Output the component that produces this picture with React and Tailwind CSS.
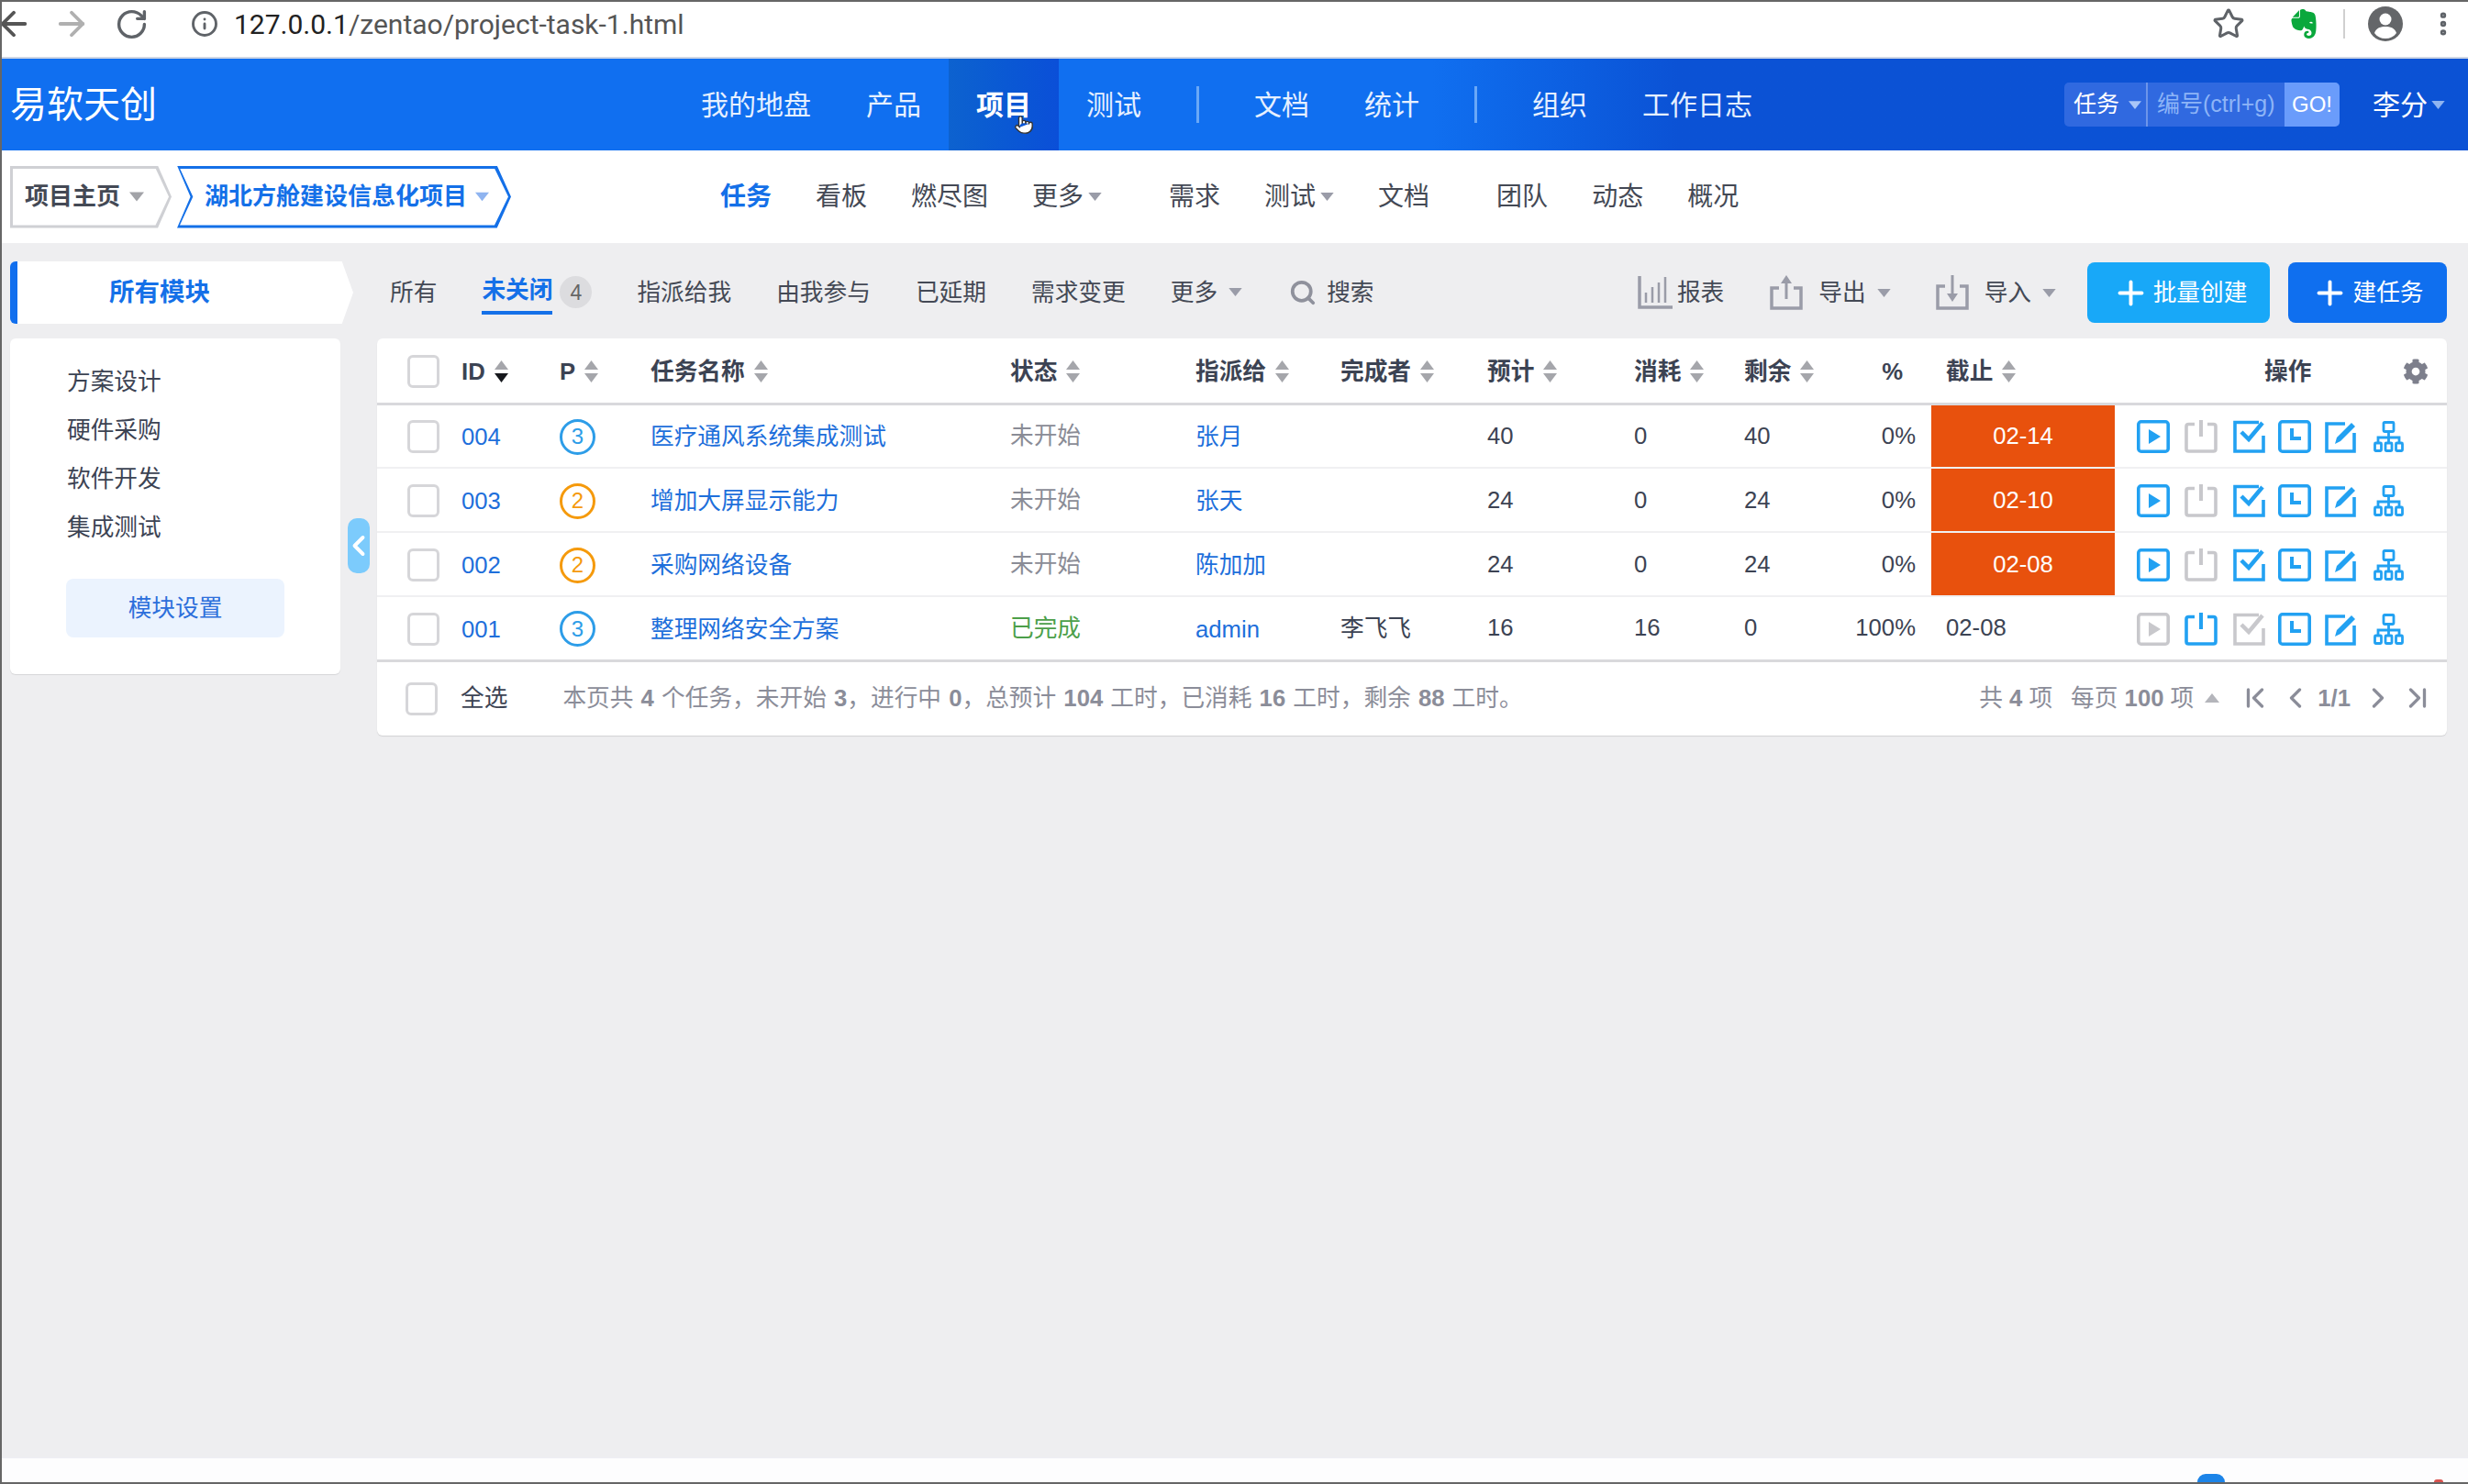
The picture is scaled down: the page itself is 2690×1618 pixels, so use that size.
import React from 'react';
import { ArrowLeft, ArrowRight, RotateCw, Info, Star, EllipsisVertical, Plus, Search, ChevronLeft, ChevronRight, ChevronFirst, ChevronLast, Pointer } from 'lucide-react';
import { FaCog } from 'react-icons/fa';
import { SiEvernote } from 'react-icons/si';

const tasks = [
  { id: '004', pri: 3, name: '医疗通风系统集成测试', status: '未开始', to: '张月', by: '', est: 40, used: 0, left: 40, pct: '0%', due: '02-14', late: true },
  { id: '003', pri: 2, name: '增加大屏显示能力', status: '未开始', to: '张天', by: '', est: 24, used: 0, left: 24, pct: '0%', due: '02-10', late: true },
  { id: '002', pri: 2, name: '采购网络设备', status: '未开始', to: '陈加加', by: '', est: 24, used: 0, left: 24, pct: '0%', due: '02-08', late: true },
  { id: '001', pri: 3, name: '整理网络安全方案', status: '已完成', to: 'admin', by: '李飞飞', est: 16, used: 16, left: 0, pct: '100%', due: '02-08', late: false, done: true },
];

const ON = '#22a1f2';
const OFF = '#c8c8cc';

function Caret({ color = '#9a9ca8', up = false, w = 16, h = 10, className = '' }) {
  return (
    <svg width={w} height={h} viewBox="0 0 16 10" className={className}>
      <path d={up ? 'M8 0L16 10H0Z' : 'M0 0H16L8 10Z'} fill={color} />
    </svg>
  );
}

function SortIcon({ active }) {
  return (
    <svg width="17" height="24" viewBox="0 0 17 24" className="ml-[9px] shrink-0">
      <path d="M8.5 0L16 10H1Z" fill="#a5a6ab" />
      <path d="M1 14H16L8.5 24Z" fill={active ? '#16181d' : '#a5a6ab'} />
    </svg>
  );
}

function Checkbox() {
  return <div className="w-[35px] h-[36px] rounded-[6px] border-[3px] border-[#d6d6d9] bg-white" />;
}

function PlayIcon({ color }) {
  return (
    <svg width="36" height="36" viewBox="0 0 36 36" fill="none">
      <rect x="1.8" y="1.8" width="32.4" height="32.4" rx="3" stroke={color} strokeWidth="3.6" />
      <path d="M13 10L26 18L13 26Z" fill={color} />
    </svg>
  );
}

function FinishIcon({ color }) {
  return (
    <svg width="36" height="36" viewBox="0 0 36 36" fill="none">
      <path d="M11 4.500H4.500Q2 4.500 2 7V31.500Q2 34 4.500 34H31.500Q34 34 34 31.500V7Q34 4.500 31.500 4.500H25" stroke={color} strokeWidth="3.600" />
      <path d="M18 0V18" stroke={color} strokeWidth="4" />
    </svg>
  );
}

function CheckIcon({ color }) {
  return (
    <svg width="36" height="36" viewBox="0 0 36 36" fill="none">
      <path d="M28 2.500H2V34H33V17" stroke={color} strokeWidth="3.600" />
      <path d="M9 13L17 21L32 3" stroke={color} strokeWidth="4.500" />
    </svg>
  );
}

function ClockIcon({ color }) {
  return (
    <svg width="36" height="36" viewBox="0 0 36 36" fill="none">
      <rect x="1.800" y="1.800" width="32.400" height="32.400" rx="3" stroke={color} strokeWidth="3.600" />
      <path d="M15 9V20H25" stroke={color} strokeWidth="4" />
    </svg>
  );
}

function EditIcon({ color }) {
  return (
    <svg width="36" height="36" viewBox="0 0 36 36" fill="none">
      <path d="M22 4H2V34H32V14" stroke={color} strokeWidth="3.600" />
      <path d="M11 26L13 19L29 3L33 7L17 23Z" fill={color} />
    </svg>
  );
}

function TreeIcon({ color }) {
  return (
    <svg width="34" height="34" viewBox="0 0 34 34" fill="none" stroke={color} strokeWidth="2.800">
      <rect x="11" y="1.500" width="11" height="10" rx="1" />
      <path d="M16.500 11.500V18M5 24V18H28V24M16.500 18V24" />
      <rect x="1.500" y="24" width="7" height="8.500" rx="1" />
      <rect x="13" y="24" width="7" height="8.500" rx="1" />
      <rect x="24.500" y="24" width="7" height="8.500" rx="1" />
    </svg>
  );
}

function BarsIcon() {
  return (
    <svg width="38" height="36" viewBox="0 0 38 36" fill="none" stroke="#9a9ca8">
      <path d="M2 0V34H38" strokeWidth="3.500" />
      <path d="M9 18V29M16 12V29M23 7V29M30 1V29" strokeWidth="2.500" />
    </svg>
  );
}

function ExportIcon() {
  return (
    <svg width="36" height="38" viewBox="0 0 36 38" fill="none" stroke="#9a9ca8">
      <path d="M10 14H2V36H34V14H26" strokeWidth="3.500" />
      <path d="M18 26V4" strokeWidth="3" />
      <path d="M12 9L18 0L24 9Z" fill="#9a9ca8" stroke="none" />
    </svg>
  );
}

function ImportIcon() {
  return (
    <svg width="36" height="38" viewBox="0 0 36 38" fill="none" stroke="#9a9ca8">
      <path d="M10 12H2V36H34V12H26" strokeWidth="3.500" />
      <path d="M18 0V22" strokeWidth="3" />
      <path d="M12 20L18 29L24 20Z" fill="#9a9ca8" stroke="none" />
    </svg>
  );
}

function Th({ label, sort = true, active = false }) {
  return (
    <th className="p-0 pt-[3px] pl-[10px] font-bold text-left">
      <div className="flex items-center whitespace-nowrap">
        {label}
        {sort && <SortIcon active={active} />}
      </div>
    </th>
  );
}

const topNav1 = ['我的地盘', '产品', '项目', '测试'];
const topNav2 = ['文档', '统计'];
const topNav3 = ['组织', '工作日志'];

export default function App() {
  const navItem = (t) => (
    <a key={t} className={`h-full px-[30px] flex items-center whitespace-nowrap relative ${t === '项目' ? 'font-bold text-white bg-linear-to-r from-[#0d62cf] to-[#0b4fd8]' : 'text-[#e6f0ff]'}`}>
      {t}
      {t === '项目' && <Pointer size={22} fill="#fff" stroke="#333" strokeWidth={1.500} className="absolute left-[71px] top-[61px]" />}
    </a>
  );

  return (
    <div className="w-full h-[1618px] flex flex-col overflow-hidden bg-[#eeeef0] border-l-2 border-b-2 border-[#666] text-[25.700px] text-[#3c4353] font-['Liberation_Sans','Noto_Sans_CJK_SC',sans-serif]">
      {/* browser bar */}
      <div className="h-[64px] shrink-0 flex items-center pb-[12px] bg-white border-t-2 border-b-2 border-t-[#666] border-b-[#ced6e4] text-[#5f6368]">
        <ArrowLeft size={42} strokeWidth={2.200} className="-ml-[8px] shrink-0 text-[#555]" />
        <ArrowRight size={42} strokeWidth={2.200} className="ml-[21px] shrink-0 text-[#b0b0b0]" />
        <RotateCw size={37} strokeWidth={2.200} className="ml-[26px] shrink-0" />
        <Info size={30} strokeWidth={2.300} className="ml-[46px] shrink-0" />
        <div className="ml-[17px] text-[30px] font-['Roboto',sans-serif] text-[#222] whitespace-nowrap">
          127.0.0.1<span className="text-[#555]">/zentao/project-task-1.html</span>
        </div>
        <div className="ml-auto flex items-center">
          <Star size={36} strokeWidth={2} />
          <SiEvernote size={32} className="ml-[48px] text-[#0aa83c]" />
          <div className="ml-[27px] w-[2px] h-[32px] bg-[#d0d0d0]" />
          <svg width="38" height="38" viewBox="0 0 38 38" className="ml-[25px]">
            <circle cx="19" cy="19" r="19" fill="#646669" />
            <circle cx="19" cy="14" r="6.500" fill="#fff" />
            <path d="M7 29C9 23 14 22 19 22S29 23 31 29C28 33 24 35 19 35S10 33 7 29Z" fill="#fff" />
          </svg>
          <EllipsisVertical size={32} strokeWidth={2.800} className="ml-[28px] mr-[11px]" />
        </div>
      </div>

      {/* main nav */}
      <div className="h-[100px] shrink-0 flex items-center text-white text-[30px] bg-linear-to-r from-[#106ff0] from-58% to-[#0b52d5] to-68%">
        <div className="ml-[9px] w-[723px] text-[40px] leading-none">易软天创</div>
        {topNav1.map(navItem)}
        <div className="mx-[30px] w-[3px] h-[40px] bg-[#6aa8f7]" />
        {topNav2.map(navItem)}
        <div className="mx-[30px] w-[3px] h-[40px] bg-[#6aa8f7]" />
        {topNav3.map(navItem)}
        <div className="ml-auto flex items-center">
          <div className="h-[48px] flex items-stretch rounded-[5px] overflow-hidden text-[25px] bg-[#3069e0]">
            <div className="w-[91px] flex items-center pl-[10px] border-r-[2px] border-[#6d95ea]">
              任务
              <Caret color="#a9c6f8" w={14} h={9} className="ml-[10px]" />
            </div>
            <div className="w-[149px] flex items-center pl-[10px] text-[#8db4f7] whitespace-nowrap">编号(ctrl+g)</div>
            <div className="w-[60px] flex items-center justify-center bg-[#6a9cfb] text-[24px]">GO!</div>
          </div>
          <div className="ml-[36px] mr-[25px] flex items-center">
            李分
            <Caret color="#8fb4f0" w={15} h={9} className="ml-[4px]" />
          </div>
        </div>
      </div>

      {/* project nav */}
      <div className="h-[101px] shrink-0 bg-white flex items-center text-[28px] text-[#444955]">
        <div className="ml-[9px] w-[176px] h-[68px] bg-[#cfd0d4] p-[3px] [clip-path:polygon(0_0,91.500%_0,100%_50%,91.500%_100%,0_100%)]">
          <div className="h-full bg-white pl-[13px] flex items-center font-bold text-[26px] [clip-path:polygon(0_0,91.500%_0,100%_50%,91.500%_100%,0_100%)]">
            项目主页
            <Caret w={16} h={11} color="#a2a3a8" className="ml-[10px]" />
          </div>
        </div>
        <div className="ml-[6px] w-[364px] h-[68px] bg-[#1470e8] p-[3px] [clip-path:polygon(0_0,95.800%_0,100%_50%,95.800%_100%,0_100%,4%_50%)]">
          <div className="h-full bg-white pl-[27px] flex items-center font-bold text-[26px] text-[#1470e8] whitespace-nowrap [clip-path:polygon(0_0,95.800%_0,100%_50%,95.800%_100%,0_100%,4%_50%)]">
            湖北方舱建设信息化项目
            <Caret w={15} h={11} color="#8fb4f0" className="ml-[9px]" />
          </div>
        </div>
        <div className="ml-[228px] flex items-center gap-[48px] whitespace-nowrap">
          <a className="font-bold text-[#1470e8]">任务</a>
          <a>看板</a>
          <a>燃尽图</a>
          <a className="flex items-center">更多<Caret w={15} h={9} className="ml-[5px]" /></a>
          <a className="ml-[25px]">需求</a>
          <a className="flex items-center">测试<Caret w={15} h={9} className="ml-[5px]" /></a>
          <a>文档</a>
          <a className="ml-[25px]">团队</a>
          <a>动态</a>
          <a>概况</a>
        </div>
      </div>

      {/* page body */}
      <div className="flex pt-[20px] pl-[9px] pr-[23px]">
        <aside className="w-[374px] shrink-0 relative">
          <div className="h-[68px] w-[374px] bg-white border-l-[8px] border-[#116fee] rounded-l-[6px] pl-[100px] flex items-center font-bold text-[27.500px] text-[#1470e8] [clip-path:polygon(0_0,96.700%_0,100%_50%,96.700%_100%,0_100%)]">
            所有模块
          </div>
          <div className="mt-[16px] w-[360px] h-[366px] bg-white rounded-[6px] pt-[21px] pl-[62px] shadow-[0_1px_1px_rgba(0,0,0,0.1)]">
            {['方案设计', '硬件采购', '软件开发', '集成测试'].map((m) => (
              <div key={m} className="h-[53px] flex items-center">{m}</div>
            ))}
            <button className="mt-[29px] -ml-[1px] w-[238px] h-[64px] rounded-[8px] bg-[#ebf3fe] text-[#2d6fdb] text-[25.700px]">模块设置</button>
          </div>
          <div className="absolute left-[368px] top-[280px] w-[24px] h-[60px] rounded-[10px] bg-[#7ccbfc] flex items-center justify-center text-white">
            <ChevronLeft size={36} strokeWidth={2.600} className="shrink-0" />
          </div>
        </aside>

        <main className="ml-[26px] flex-1 min-w-0">
          <div className="h-[68px] flex items-center pl-[14px] whitespace-nowrap text-[#444955]">
            <div className="flex items-center gap-[49px]">
              <a>所有</a>
              <div className="flex items-center">
                <a className="font-bold text-[#1470e8] border-b-4 border-[#1470e8] pt-[2px] pb-[4px]">未关闭</a>
                <span className="ml-[8px] w-[35px] h-[35px] rounded-full bg-[#dcdcdf] flex items-center justify-center text-[23px] text-[#666]">4</span>
              </div>
              <a>指派给我</a>
              <a>由我参与</a>
              <a>已延期</a>
              <a>需求变更</a>
              <a className="flex items-center">更多<Caret w={15} h={9} className="ml-[12px]" /></a>
            </div>
            <Search size={30} strokeWidth={3} className="ml-[51px] text-[#8f919c]" />
            <span className="ml-[11px]">搜索</span>
            <div className="ml-auto flex items-center">
              <BarsIcon />
              <span className="ml-[5px]">报表</span>
              <span className="ml-[50px]"><ExportIcon /></span>
              <span className="ml-[17px]">导出</span>
              <Caret w={15} h={9} className="ml-[12px]" />
              <span className="ml-[49px]"><ImportIcon /></span>
              <span className="ml-[17px]">导入</span>
              <Caret w={15} h={9} className="ml-[12px]" />
              <button className="ml-[34px] w-[199px] h-[66px] rounded-[8px] bg-[#18a8f8] text-white flex items-center justify-center pl-[2px]">
                <Plus size={41} strokeWidth={2.300} className="mr-[4px]" />批量创建
              </button>
              <button className="ml-[20px] w-[173px] h-[66px] rounded-[8px] bg-[#0f6fef] text-white flex items-center justify-center">
                <Plus size={41} strokeWidth={2.300} className="mr-[4px]" />建任务
              </button>
            </div>
          </div>

          <div className="mt-[16px] bg-white rounded-[6px] shadow-[0_1px_1px_rgba(0,0,0,0.12)]">
            <table className="w-full table-fixed border-collapse">
              <colgroup>
                <col className="w-[82px]" />
                <col className="w-[107px]" />
                <col className="w-[100px]" />
                <col className="w-[391px]" />
                <col className="w-[202px]" />
                <col className="w-[158px]" />
                <col className="w-[160px]" />
                <col className="w-[160px]" />
                <col className="w-[120px]" />
                <col className="w-[114px]" />
                <col className="w-[100px]" />
                <col className="w-[200px]" />
                <col />
              </colgroup>
              <thead>
                <tr className="h-[71px] border-b-[3px] border-[#d9d9dc]">
                  <th className="p-0 pt-[2px] pl-[33px]"><Checkbox /></th>
                  <Th label="ID" active />
                  <Th label="P" />
                  <th className="p-0 pt-[3px] pl-[9px] font-bold text-left">
                    <div className="flex items-center whitespace-nowrap">任务名称<SortIcon /></div>
                  </th>
                  <Th label="状态" />
                  <Th label="指派给" />
                  <Th label="完成者" />
                  <Th label="预计" />
                  <Th label="消耗" />
                  <Th label="剩余" />
                  <th className="p-0 pt-[3px] pr-[31px] text-right font-bold">%</th>
                  <th className="p-0 pt-[3px] pl-[16px] font-bold text-left">
                    <div className="flex items-center whitespace-nowrap">截止<SortIcon /></div>
                  </th>
                  <th className="p-0 pt-[3px] font-bold">
                    <div className="flex items-center pl-[163px]">
                      操作
                      <FaCog size={28} className="ml-[100px] text-[#7d7f8c]" />
                    </div>
                  </th>
                </tr>
              </thead>
              <tbody>
                {tasks.map((t, i) => (
                  <tr key={t.id} className={`h-[70px] ${i === tasks.length - 1 ? 'border-b-[3px] border-[#d9d9dc]' : 'border-b-2 border-[#f0f0f2]'}`}>
                    <td className="p-0 pt-[2px] pl-[33px]"><Checkbox /></td>
                    <td className="p-0 pt-[3px] pl-[10px] text-[#1e6fdb]">{t.id}</td>
                    <td className="p-0 pt-[2px] pl-[10px]">
                      <span className={`w-[39px] h-[39px] rounded-full border-[3.500px] flex items-center justify-center text-[24px] ${t.pri === 3 ? 'border-[#2d9de8] text-[#2d9de8]' : 'border-[#f59a0c] text-[#f59a0c]'}`}>{t.pri}</span>
                    </td>
                    <td className="p-0 pt-[3px] pl-[9px] text-[#1e6fdb] whitespace-nowrap">{t.name}</td>
                    <td className={`p-0 pt-[1px] pl-[10px] ${t.done ? 'text-[#4c9f4a]' : 'text-[#8a8c96]'}`}>{t.status}</td>
                    <td className="p-0 pt-[3px] pl-[10px] text-[#1e6fdb]">{t.to}</td>
                    <td className="p-0 pt-[1px] pl-[10px]">{t.by}</td>
                    <td className="p-0 pl-[10px]">{t.est}</td>
                    <td className="p-0 pl-[10px]">{t.used}</td>
                    <td className="p-0 pl-[10px]">{t.left}</td>
                    <td className="p-0 pr-[17px] text-right">{t.pct}</td>
                    {t.late ? (
                      <td className="p-0 text-center text-white bg-[#e8510d]">{t.due}</td>
                    ) : (
                      <td className="p-0 pl-[16px]">{t.due}</td>
                    )}
                    <td className="p-0 pt-[2px] pl-[24px]">
                      <div className="flex items-center">
                        <PlayIcon color={t.done ? OFF : ON} />
                        <span className="ml-[16px] flex"><FinishIcon color={t.done ? ON : OFF} /></span>
                        <span className="ml-[17px] flex"><CheckIcon color={t.done ? OFF : ON} /></span>
                        <span className="ml-[13px] flex"><ClockIcon color={ON} /></span>
                        <span className="ml-[15px] flex"><EditIcon color={ON} /></span>
                        <span className="ml-[17px] flex"><TreeIcon color={ON} /></span>
                      </div>
                    </td>
                  </tr>
                ))}
              </tbody>
            </table>

            <div className="h-[80px] flex items-center pl-[31px] pr-[14px] whitespace-nowrap text-[#8b8d99]">
              <Checkbox />
              <span className="ml-[25px] text-[#3c4353]">全选</span>
              <span className="ml-[60px] [word-spacing:1px]">
                本页共 <b>4</b> 个任务，未开始 <b>3</b>，进行中 <b>0</b>，总预计 <b>104</b> 工时，已消耗 <b>16</b> 工时，剩余 <b>88</b> 工时。
              </span>
              <div className="ml-auto flex items-center">
                <span>共 <b>4</b> 项</span>
                <span className="ml-[20px]">每页 <b>100</b> 项</span>
                <Caret up w={16} h={10} color="#b4b5bb" className="ml-[12px]" />
                <ChevronFirst size={36} strokeWidth={2.200} className="ml-[21px]" />
                <ChevronLeft size={36} strokeWidth={2.200} className="ml-[8px]" />
                <b className="ml-[6px]">1/1</b>
                <ChevronRight size={36} strokeWidth={2.200} className="ml-[12px]" />
                <ChevronLast size={36} strokeWidth={2.200} className="ml-[7px]" />
              </div>
            </div>
          </div>
        </main>
      </div>

      {/* status strip, cut off by the window */}
      <div className="mt-auto h-[27px] shrink-0 bg-[#fdfdfe] border-t border-[#eeeef4] flex items-end overflow-hidden">
        <div className="ml-[2393px] w-[30px] h-[9px] rounded-t-full bg-[#1c84e8]" />
        <div className="ml-[228px] w-[10px] h-[3px] rounded-t-full bg-[#d9534f]" />
      </div>
    </div>
  );
}
